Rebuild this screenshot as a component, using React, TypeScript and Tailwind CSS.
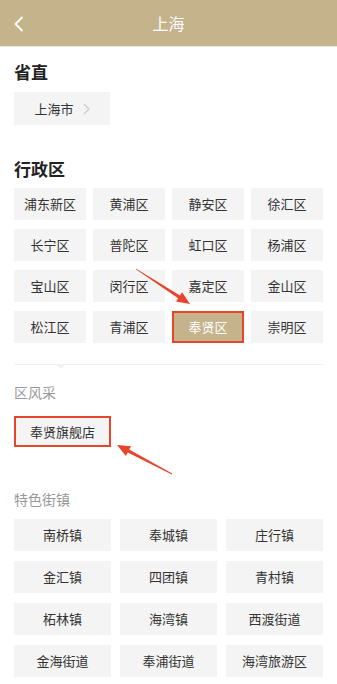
import React from "react";

const districts = [
  "浦东新区", "黄浦区", "静安区", "徐汇区",
  "长宁区", "普陀区", "虹口区", "杨浦区",
  "宝山区", "闵行区", "嘉定区", "金山区",
  "松江区", "青浦区", "奉贤区", "崇明区",
];

const towns = [
  "南桥镇", "奉城镇", "庄行镇",
  "金汇镇", "四团镇", "青村镇",
  "柘林镇", "海湾镇", "西渡街道",
  "金海街道", "奉浦街道", "海湾旅游区",
];

function Arrow({ x1, y1, x2, y2 }: { x1: number; y1: number; x2: number; y2: number }) {
  const dx = x2 - x1;
  const dy = y2 - y1;
  const len = Math.sqrt(dx * dx + dy * dy);
  const ux = dx / len;
  const uy = dy / len;
  const px = -uy;
  const py = ux;
  const headLen = 13;
  const headW = 5.5;
  const bx = x2 - ux * headLen;
  const by = y2 - uy * headLen;
  const tailW = 0.4;
  const neckW = 1.6;
  const pts = [
    [x1 + px * tailW, y1 + py * tailW],
    [bx + px * neckW, by + py * neckW],
    [bx + px * headW, by + py * headW],
    [x2, y2],
    [bx - px * headW, by - py * headW],
    [bx - px * neckW, by - py * neckW],
    [x1 - px * tailW, y1 - py * tailW],
  ]
    .map((p) => `${p[0].toFixed(1)},${p[1].toFixed(1)}`)
    .join(" ");
  return <polygon points={pts} fill="#e8442c" />;
}

export default function App() {
  const font = { fontFamily: '"Noto Sans CJK SC", "Noto Sans", sans-serif' };
  return (
    <div className="relative w-[337px] h-[684px] bg-white overflow-hidden" style={font}>
      {/* header */}
      <div className="relative h-[46px] bg-[#c5b38b] flex items-center justify-center">
        <svg className="absolute left-[12px] top-[16px]" width="14" height="16" viewBox="0 0 14 16">
          <path d="M10 1.5 L3.5 8 L10 14.5" fill="none" stroke="#ffffff" strokeWidth="1.8" strokeLinecap="round" strokeLinejoin="round" />
        </svg>
        <span className="text-white text-[16px]">上海</span>
      </div>
      <div className="h-[1px] bg-[#ece8df]" />

      <div className="px-[14px]">
        {/* 省直 */}
        <div className="mt-[13px] h-[24px] leading-[24px] text-[17px] font-bold text-[#222]">省直</div>
        <div className="mt-[8px] w-[96px] h-[33px] bg-[#f4f4f4] flex items-center justify-center gap-[9px] text-[13px] text-[#333]">
          <span>上海市</span>
          <svg width="7" height="12" viewBox="0 0 7 12">
            <path d="M1 1 L6 6 L1 11" fill="none" stroke="#c8c8c8" strokeWidth="1.2" />
          </svg>
        </div>

        {/* 行政区 */}
        <div className="mt-[32px] h-[24px] leading-[24px] text-[17px] font-bold text-[#222]">行政区</div>
        <div className="mt-[7px] grid grid-cols-4 gap-x-[7px] gap-y-[9px] w-[309px]">
          {districts.map((d) =>
            d === "奉贤区" ? (
              <div
                key={d}
                className="h-[32px] bg-[#c5b38b] border-2 border-[#e4472c] flex items-center justify-center text-[13px] text-white"
              >
                {d}
              </div>
            ) : (
              <div key={d} className="h-[32px] bg-[#f4f4f4] flex items-center justify-center text-[13px] text-[#333]">
                {d}
              </div>
            )
          )}
        </div>

        {/* divider */}
        <div className="relative mt-[21px] h-[1px] w-[309px] bg-[#f0f0f0]">
          <div className="absolute left-[42px] top-0 w-0 h-0 border-l-[5px] border-r-[5px] border-t-[5px] border-l-transparent border-r-transparent border-t-[#f0f0f0]" />
        </div>

        {/* 区风采 */}
        <div className="mt-[17px] h-[20px] leading-[20px] text-[14px] text-[#999]">区风采</div>
        <div className="mt-[14px] w-[97px] h-[31px] bg-[#f4f4f4] border-2 border-[#e4472c] flex items-center justify-center text-[13px] text-[#333]">
          奉贤旗舰店
        </div>

        {/* 特色街镇 */}
        <div className="mt-[42px] h-[20px] leading-[20px] text-[14px] text-[#999]">特色街镇</div>
        <div className="mt-[10px] grid grid-cols-3 gap-x-[9px] gap-y-[10px] w-[309px]">
          {towns.map((t) => (
            <div key={t} className="h-[32px] bg-[#f4f4f4] flex items-center justify-center text-[13px] text-[#333]">
              {t}
            </div>
          ))}
        </div>
      </div>

      {/* annotation arrows */}
      <svg className="absolute left-0 top-0 pointer-events-none" width="337" height="684" viewBox="0 0 337 684">
        <Arrow x1={136} y1={269} x2={190} y2={304} />
        <Arrow x1={172} y1={474} x2={117} y2={445} />
      </svg>
    </div>
  );
}
